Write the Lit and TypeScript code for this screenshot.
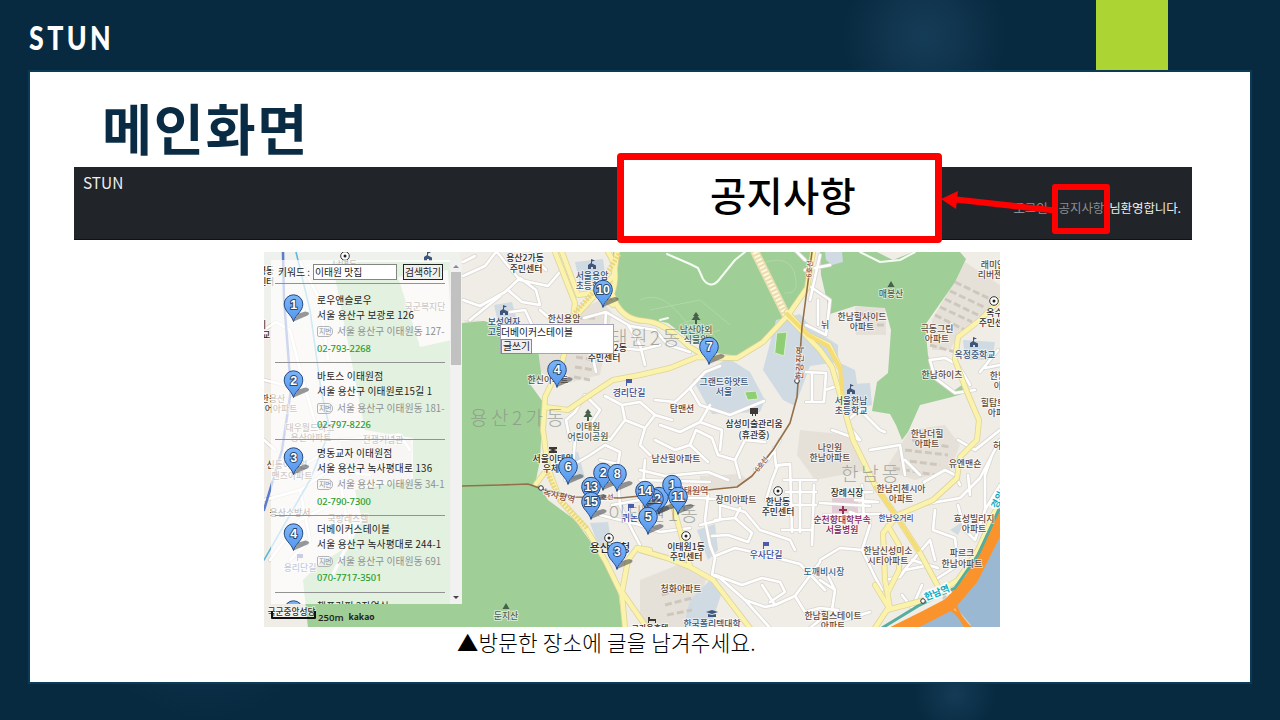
import { LitElement, html, svg, css } from "lit";
import { customElement } from "lit/decorators.js";

type Kind = "apt" | "gov" | "edu" | "park" | "road" | "med" | "rail" | "shop";
interface Label { x: number; y: number; t: string; k: Kind; s?: number; r?: number; }

const LABELS: Label[] = [
  { x: 525, y: 261, t: "용산2가동", k: "gov" }, { x: 526, y: 272, t: "주민센터", k: "gov" },
  { x: 592, y: 279, t: "서울용암", k: "edu" }, { x: 592, y: 289, t: "초등학교", k: "edu" },
  { x: 564, y: 322, t: "한신용암", k: "apt" },
  { x: 504, y: 325, t: "보성여자", k: "edu" }, { x: 504, y: 335, t: "고등학교", k: "edu" },
  { x: 608, y: 351, t: "이태원2동", k: "gov" }, { x: 604, y: 361, t: "주민센터", k: "gov" },
  { x: 548, y: 383, t: "한신아파트", k: "apt" },
  { x: 629, y: 396, t: "경리단길", k: "road" },
  { x: 588, y: 430, t: "이태원", k: "park" }, { x: 588, y: 440, t: "어린이공원", k: "park" },
  { x: 696, y: 333, t: "남산야외", k: "park" }, { x: 696, y: 343, t: "식물원", k: "park" },
  { x: 724, y: 385, t: "그랜드하얏트", k: "edu" }, { x: 724, y: 395, t: "서울", k: "edu" },
  { x: 682, y: 412, t: "탑맨션", k: "apt" },
  { x: 754, y: 427, t: "삼성미술관리움", k: "gov" }, { x: 754, y: 438, t: "(휴관중)", k: "gov" },
  { x: 891, y: 297, t: "매봉산", k: "park" },
  { x: 862, y: 320, t: "한남힐사이드", k: "apt" }, { x: 862, y: 330, t: "아파트", k: "apt" },
  { x: 825, y: 328, t: "뉘", k: "apt" },
  { x: 993, y: 268, t: "래미안", k: "apt" }, { x: 990, y: 278, t: "리버젠", k: "apt" },
  { x: 1001, y: 316, t: "옥수1동", k: "gov" }, { x: 995, y: 326, t: "주민센터", k: "gov" },
  { x: 937, y: 332, t: "극동그린", k: "apt" }, { x: 937, y: 342, t: "아파트", k: "apt" },
  { x: 975, y: 358, t: "옥정중학교", k: "edu" },
  { x: 942, y: 378, t: "한남하이츠", k: "apt" },
  { x: 998, y: 379, t: "한남", k: "apt" }, { x: 1002, y: 389, t: "아파", k: "apt" },
  { x: 851, y: 404, t: "서울한남", k: "edu" }, { x: 851, y: 414, t: "초등학교", k: "edu" },
  { x: 993, y: 406, t: "힐탑트", k: "apt" }, { x: 1000, y: 416, t: "아파트", k: "apt" },
  { x: 927, y: 437, t: "한남더힐", k: "apt" }, { x: 927, y: 447, t: "아파트", k: "apt" },
  { x: 997, y: 449, t: "허", k: "apt" },
  { x: 830, y: 451, t: "나인원", k: "apt" }, { x: 830, y: 461, t: "한남아파트", k: "apt" },
  { x: 965, y: 467, t: "유엔맨숀", k: "apt" },
  { x: 847, y: 496, t: "장례식장", k: "gov" },
  { x: 901, y: 492, t: "한남리첸시아", k: "apt" }, { x: 901, y: 502, t: "아파트", k: "apt" },
  { x: 842, y: 523, t: "순천향대학부속", k: "med" }, { x: 842, y: 533, t: "서울병원", k: "med" },
  { x: 896, y: 521, t: "한남오거리", k: "road", s: 7.6 },
  { x: 974, y: 522, t: "효성빌리지", k: "apt" }, { x: 974, y: 532, t: "아파트", k: "apt" },
  { x: 888, y: 554, t: "한남신성미소", k: "apt" }, { x: 888, y: 564, t: "시티아파트", k: "apt" },
  { x: 962, y: 556, t: "파르크", k: "apt" }, { x: 962, y: 567, t: "한남아파트", k: "apt" },
  { x: 824, y: 575, t: "도깨비시장", k: "shop" },
  { x: 833, y: 619, t: "한남힐스테이트", k: "apt" }, { x: 833, y: 629, t: "아파트", k: "apt" },
  { x: 676, y: 462, t: "남산힐아파트", k: "apt" },
  { x: 736, y: 503, t: "장미아파트", k: "apt" },
  { x: 778, y: 505, t: "한남동", k: "gov" }, { x: 778, y: 515, t: "주민센터", k: "gov" },
  { x: 686, y: 550, t: "이태원1동", k: "gov" }, { x: 686, y: 560, t: "주민센터", k: "gov" },
  { x: 766, y: 558, t: "우사단길", k: "road" },
  { x: 681, y: 592, t: "청화아파트", k: "apt" },
  { x: 712, y: 627, t: "한국폴리텍대학", k: "edu" },
  { x: 650, y: 631, t: "크라운호텔", k: "gov", s: 8 },
  { x: 553, y: 462, t: "서울이태원", k: "gov" }, { x: 555, y: 472, t: "우체국", k: "gov" },
  { x: 610, y: 552, t: "용산구청", k: "gov", s: 11 },
  { x: 506, y: 619, t: "둔지산", k: "park" },
  { x: 634, y: 521, t: "퀴논길", k: "road" },
  { x: 692, y: 494, t: "이태원역", k: "rail" },
  { x: 559, y: 499, t: "녹사평역", k: "rail", r: 14 },
  { x: 605, y: 500, t: "6호선", k: "rail", s: 7, r: -4 },
  { x: 800, y: 366, t: "한강진역", k: "rail", r: -88, s: 9 },
  { x: 809, y: 272, t: "6호선", k: "rail", r: -85, s: 7 },
  { x: 761, y: 467, t: "6호선", k: "rail", r: -52, s: 7 },
  { x: 425, y: 310, t: "국군복지단", k: "apt" },
  { x: 310, y: 431, t: "대우월드마크", k: "apt" }, { x: 311, y: 441, t: "용산아파트", k: "apt" },
  { x: 383, y: 443, t: "전쟁기념관", k: "apt" },
  { x: 287, y: 468, t: "신동아트윈", k: "apt" }, { x: 292, y: 479, t: "맨즈아파트", k: "apt" },
  { x: 290, y: 516, t: "용산소방서", k: "gov" },
  { x: 348, y: 522, t: "국방레스텔", k: "apt" },
  { x: 300, y: 571, t: "용리단길", k: "road" },
  { x: 273, y: 402, t: "한용산", k: "apt" }, { x: 281, y: 412, t: "어아파트", k: "apt" },
  { x: 262, y: 274, t: "남영동", k: "gov" }, { x: 262, y: 285, t: "민센터", k: "gov" },
  { x: 262, y: 328, t: "지", k: "gov" }, { x: 266, y: 338, t: "교", k: "gov" },
  { x: 345, y: 268, t: "남영동", k: "gov" },
  { x: 291.5, y: 615, t: "국군중앙성당", k: "gov", s: 8.7 },
];

const PINS: [number, number, string][] = [
  [603, 307, "10"], [557, 387, "4"], [709, 364, "7"], [568, 484, "6"], [603, 490, "2"], [617, 491, "8"],
  [591, 504, "13"], [591, 519, "15"], [659, 514, ""], [654, 516, "12"], [645, 508, "14"],
  [672, 502, "1"], [678, 514, "11"], [648, 534, "5"], [617, 569, "3"],
];

const pin = (x: number, y: number, n: string) => svg`
  <g transform="translate(${x} ${y})">
    <path class="shade" d="M0 0L5-8L12-10Q18-9 14-6Z"></path>
    <path class="pin" d="M0 0C-2-7-9.300-10-9.300-17.400A9.300 9.300 0 0 1 9.300-17.400C9.300-10 2-7 0 0Z"></path>
    <text class="num" x="0" y="-13" text-anchor="middle">${n}</text>
  </g>`;

const pinCss = css`
  .shade { fill: #30343a; opacity: .5; }
  .pin { fill: url(#blue); stroke: #234a80; stroke-width: 1; }
  .num { font: 600 12.500px "Liberation Sans", sans-serif; fill: #fff; stroke: #29476d; stroke-width: 1.8px; paint-order: stroke; letter-spacing: -.3px; }
`;
const pinDefs = svg`<defs><linearGradient id="blue" x2="0" y2="1"><stop offset="0" stop-color="#7db4f8"></stop><stop offset="1" stop-color="#5397ee"></stop></linearGradient></defs>`;

const MINOR = [
  "M463 276L485 266L496 252M463 300L480 306L505 292L520 278L536 290L540 305L522 302L508 290M497 252L505 262L520 280L548 286L560 272",
  "M463 262L475 256M470 320L500 296M532 325L525 310L510 312M540 310L556 324L548 348M546 270L538 262L534 252",
  "M584 318L606 312L605 330L590 345L596 372M606 312L630 326L655 330M594 345L640 350L660 345M628 325L640 345L645 365M655 330L668 345L690 352",
  "M570 440L566 420L575 412L585 395L600 410L590 425L610 440L625 420L622 405L605 396M625 420L645 428L655 415L640 402L622 405M645 428L640 445L650 455",
  "M655 400L675 402L690 388L705 372L720 366M690 388L700 405L730 415L764 401M660 425L680 432L700 422L722 430L720 450M655 415L672 420M700 422L710 405",
  "M655 440L675 450L690 445L708 462M690 445L696 430L712 438L718 455L735 460L745 440L765 442M735 460L740 478M640 470L665 476L708 472L728 480M640 480L710 482",
  "M565 480L573 465L590 455L605 445L620 452L618 464L600 460M573 465L575 440M617 470L620 505L632 530L640 545M645 460L643 485",
  "M612 505L640 500M600 515L640 525L660 532L690 528M640 500L660 505L672 498L700 498L735 500M708 495L705 520L710 545L715 558M720 500L720 520L700 525",
  "M720 505L745 512L760 530L790 540L795 550M715 520L735 518L752 533L748 542L728 535L712 536M735 518L740 508",
  "M715 556L735 548L765 555L800 564L825 590M715 558L712 575L720 578L745 600L765 607L775 605L762 585M715 575L742 585L762 578L780 582L785 592L770 602M775 605L795 596L820 562M795 596L805 612L820 608L838 610M745 600L770 628",
  "M774 448L776 466L790 464L792 532M784 480L816 480M786 492L816 492M784 505L816 505M800 482L800 532M814 485L812 545M782 530L812 530M780 440L768 460L755 470",
  "M790 464L778 465L772 480L766 500M795 250L805 260M805 270L830 265M808 285L830 300L826 335L806 325M820 255L810 300M818 300L818 325",
  "M806 372L826 373L824 402L806 402M812 373L812 402M825 390L840 385M848 420L860 410L880 430L885 432M832 430L860 440L848 425",
  "M820 503L870 506M824 515L880 514M850 493L872 492M855 500L878 502M862 485L864 520M870 525L862 550L875 577L882 590M862 550L840 548L820 560M870 520L850 512",
  "M885 580L900 577L905 570L925 566M902 595L912 608L922 585M902 573L930 540L935 560M912 560L938 568",
  "M920 505L960 498L980 478L1000 440M958 505L965 530L975 540L985 510L1000 485M985 510L985 475L992 455M935 510L933 530L955 538L958 565L938 578M970 495L968 475",
  "M924 482L945 470L955 475L960 485M905 460L920 475M870 450L900 445L905 475M958 440L975 450L1000 430",
  "M930 360L945 358L958 365L970 385M930 360L935 378L955 393L975 390M985 368L1000 365M980 372L998 350",
  "M820 580L835 590L832 610L845 620L870 612M820 620L810 628M835 590L825 570",
  "M264 330L276 322L290 330L300 370L320 440M300 262L320 300L328 360M264 380L285 385L300 378M282 445L296 470L320 455M264 440L275 450",
  "M264 500L300 490L330 470M270 560L300 520L340 500M300 490L310 540L290 560M340 440L400 435L410 450M330 470L370 475M340 480L350 540L330 580",
];

const YELLOW = [
  "M555 252L575 303L572 325L562 362L545 397L543 430L548 468L560 500L587 530L606 562L622 595L625 628",
  "M562 252L578 295L598 292L613 305M608 252Q620 270 612 294Q620 320 645 321Q664 322 690 347L703 355",
  "M617 252L614 275L572 320M545 407L568 410L593 393L613 380L640 375L670 368L697 357L737 358L763 342L789 314L807 288L813 252",
  "M787 312L808 335L829 345L840 368M789 318L820 350L832 367L841 398L853 440L876 487L897 517L920 553L940 590",
  "M1000 300L980 320L958 337L955 360L967 392L979 420L977 440L960 457L957 478L933 500L898 515L883 533L885 580L890 608M888 526L899 545L899 570L888 592",
  "M650 550L637 548L628 560L622 592L647 628M640 550L667 558L690 567L713 580L750 628M672 502L690 566M536 484L545 472",
  "M875 628L887 610L925 600L958 580L978 550L1000 500M889 608L875 585",
];

@customElement("place-map")
class PlaceMap extends LitElement {
  static styles = [pinCss, css`
    :host { display: block; width: 736px; height: 375px; overflow: hidden; }
    svg { display: block; }
    path, line { fill: none; stroke-linejoin: round; stroke-linecap: round; }
    path.pin { fill: url(#blue); } path.shade { fill: #30343a; }
    path.land, .land { fill: #f0ede7; } .block { fill: #e5e1d9; } .green { fill: #9fcf96; } .school { fill: #cfdae3; } .clinic { fill: #e3ccd5; }
    .field { fill: #8fce74; stroke: #d9efcd; } .water { fill: #9ab8d2; } .pale { fill: #eef1ec; }
    .case { stroke: #d9d6d1; stroke-width: 4.2; } .minor { stroke: #fff; stroke-width: 2.6; }
    .ycase { stroke: #ddd49a; stroke-width: 6; } .yellow { stroke: #fbf3ac; stroke-width: 4.4; }
    .gold { stroke: #f6dc74; stroke-width: 4; } .dots { stroke: #ead77e; stroke-width: 5; stroke-dasharray: 2 1.5; stroke-linecap: butt; }
    .tan { stroke: #eadcae; stroke-width: 9; } .tandot { stroke: #fff8dd; stroke-width: 6; stroke-dasharray: 2 2; stroke-linecap: butt; }
    .line6 { stroke: #94704a; stroke-width: 1.6; } .lot { stroke: #cec7bd; stroke-width: 3; stroke-dasharray: 7 3; stroke-linecap: butt; }
    .trail { stroke: #f7fbf5; stroke-width: 2; } .faint { stroke: #b0d8a7; stroke-width: 1; }
    .orange { stroke: #fb932d; stroke-width: 13; } .teal { stroke: #55ae9d; stroke-width: 3; }
    .ramp { stroke: #fb932d; stroke-width: 3; } .bridge { stroke: #cfd0cb; stroke-width: 5; }
    .sub1 { stroke: #5c7bc9; stroke-width: 2.5; } .sub4 { stroke: #5fb6dd; stroke-width: 1.6; }
    .area { font: 300 19px "Noto Sans CJK KR", sans-serif; fill: #8b918a; opacity: .75; }
    .lb { font-family: "Noto Sans CJK KR", sans-serif; font-weight: 500; stroke: #fff; stroke-opacity: .7; stroke-width: 1.6px; paint-order: stroke; text-anchor: middle; }
    .apt { fill: #5f4a3d; } .gov { fill: #302e2c; } .edu { fill: #3b5374; } .park { fill: #4c6150; }
    .road { fill: #3a4a99; } .med { fill: #83204e; } .rail { fill: #8b5040; } .shop { fill: #2a6890; }
    .han { fill: #10a9c3; font-size: 9.5px; font-weight: 600; stroke-width: 3px; stroke-opacity: .95; }
    .ring { fill: #fff; stroke: #333; stroke-width: 1; } .dot { fill: #222; }
    .icoedu { fill: #3f5579; } .icopark { fill: #46604a; } .flag { fill: #4a5caa; } .icogov { fill: #3b3836; } .cross { fill: #963356; }
    .scale { stroke: #111; stroke-width: 2; stroke-linecap: butt; }
    .m { font: 600 9.600px "Open Sans", sans-serif; fill: #222; } .k { font: 700 9.200px "Open Sans", sans-serif; fill: #222; }
  `];
  render() {
    const school = (x: number, y: number) => svg`<path class="icoedu" d="M${x - 4} ${y + 4}v-4l3-2v-4l4 1.500-3 1v2l4 2v3.500h-3v-2h-2v2z"></path>`;
    const office = (x: number, y: number) => svg`<circle class="ring" cx=${x} cy=${y} r="4.300"></circle><circle class="dot" cx=${x} cy=${y} r="1.500"></circle>`;
    const tri = (x: number, y: number) => svg`<path class="icopark" d="M${x} ${y - 3}l3.500 6h-7z"></path>`;
    const tree = (x: number, y: number) => svg`<path class="icopark" d="M${x} ${y - 6}l3 4h-1.500l3 4h-3.500v4h-2v-4h-3.500l3-4h-1.500z"></path>`;
    const flag = (x: number, y: number) => svg`<path class="flag" d="M${x - 3} ${y - 3}h6v4h-5v3h-1z"></path>`;
    return html`<svg width="736" height="375" viewBox="264 252 736 375">
      ${pinDefs}
      <rect class="land" x="264" y="252" width="736" height="375"></rect>
      <path class="pale" d="M264 252H460V330H264z"></path>
      <path class="block" d="M463 320L484 321L500 326L535 345L560 320L600 300L612 312L600 375L560 385zM640 580L690 560L700 580L685 628H640zM800 430L850 435L868 470L815 480L797 455zM885 470L910 430L945 425L960 445L950 470L915 480zM932 320L965 262L1000 285V300L958 335L950 350H932zM855 307H886V335H856zM700 476L740 474L748 480L735 488L700 488zM658 598L680 562L708 574L690 628H664z"></path>
      <path class="green" d="M332 262H462V323L484 321L500 326L538 350L542 380L530 384L543 402L540 460L536 480L548 500L575 520L600 555L618 590L623 628H308L303 580L318 565L350 545L362 520L355 490L413 480L413 438L365 430z"></path>
      <path class="land" d="M398 277L448 270L452 340L420 347z"></path>
      <path class="block" d="M340 440H411V482H350z"></path>
      <path class="green" d="M613 252H813L806 285L789 312L762 341L738 356L715 353L690 340L668 323L640 318L618 312L613 290z"></path>
      <path class="green" d="M820 252H877L893 260L913 252H960L966 259L955 282L925 325L928 355L930 362L935 378L952 392L962 385L966 389L962 394L952 397L920 405L908 432L902 440L896 425L890 414L872 411L877 382L888 373L891 330L885 308L855 306L830 314L821 275z"></path>
      <path class="school" d="M575 262L603 259L606 280L580 285zM494 305L512 302L518 325L500 330zM776 320L800 314L812 328L838 345V362L810 366L795 406L783 400L763 370zM693 380L728 358L750 372L765 400L760 412L712 414zM835 385L870 383L872 405L845 412zM838 362L855 370L858 390L842 385zM963 340L995 342L992 360H965zM697 530L715 524L718 550L708 560zM690 600L715 575L722 592L710 628H683zM590 523L608 522L612 546L600 550zM563 455L578 452L585 478L568 480zM825 252H842L843 262L832 265L826 260zM965 520L958 535L950 530z"></path>
      <path class="clinic" d="M832 498H858V518H832z"></path>
      <path class="field" d="M777 333L787 332L784 356L775 353zM745 392L756 391L758 399L748 400z"></path>
      <path class="faint" d="M640 300Q660 290 680 315T720 330M650 310L700 300L730 325M766 262Q790 255 795 275T785 293M680 325Q700 310 720 345"></path>
      <path class="trail" d="M667 254L690 264L698 268L703 279Q710 289 718 281L735 260L745 252M860 252L880 262L900 260L915 252M660 320L668 318"></path>
      <path class="lot" d="M578 318H598M577 326H597M576 335H596M577 347L596 350M576 357L595 360M575 367L594 370M574 377L590 380M935 315L965 330M940 307L972 322M945 299L978 315M950 291L984 307M955 282L990 299M900 460L940 465M893 468L935 475M905 450L948 455M912 440L950 447M662 595L690 585M665 605L692 598M667 615L692 610M857 314H884M857 325H884M930 345L955 352"></path>
      ${MINOR.map(d => svg`<path class="case" d=${d}></path>`)}
      ${MINOR.map(d => svg`<path class="minor" d=${d}></path>`)}
      <path class="tan" d="M755 252L786 315"></path><path class="tandot" d="M755 252L786 315"></path>
      <path class="water" d="M890 628L940 610L975 580L1000 528V628z"></path>
      ${YELLOW.map(d => svg`<path class="ycase" d=${d}></path>`)}
      ${YELLOW.map(d => svg`<path class="yellow" d=${d}></path>`)}
      <path class="gold" d="M876 487L897 517L918 550M787 314L808 335L828 346L840 368L843 400M641 493L673 490"></path>
      <path class="dots" d="M604 280L573 315M546 470L560 500L587 528M619 254L606 275"></path>
      <path class="bridge" d="M945 598L968 625"></path>
      <path class="orange" d="M893 633L925 617L950 604L972 578L985 552L1005 512"></path>
      <path class="ramp" d="M940 608Q955 605 966 628M955 600Q955 612 970 628"></path>
      <path class="teal" d="M882 628L918 606L955 588L978 555L1000 507"></path>
      <path class="line6" d="M462 486L500 485L528 484L545 490L575 497L620 498L670 493L707 490L737 487L752 476L773 450L790 423L797 397L802 327L812 252"></path>
      <path class="sub1" d="M283 252L284 300L291 390L282 450L264 510"></path>
      <path class="sub4" d="M296 252L310 310L321 390L330 430L310 480L264 560"></path>
      <circle class="ring" cx="541" cy="488" r="2.300"></circle><circle class="ring" cx="797" cy="381" r="2.300"></circle>
      <circle class="ring" cx="923" cy="601" r="2.300"></circle>
      <text class="area" x="470" y="425" textLength="94">용산2가동</text>
      <text class="area" x="590" y="345" textLength="90">이태원2동</text>
      <text class="area" x="608" y="521" textLength="90">이태원1동</text>
      <text class="area" x="841" y="481" textLength="58">한남동</text>
      ${LABELS.map(l => svg`<text class="lb ${l.k}" x=${l.x} y=${l.y} font-size=${l.s ?? 8.9} transform=${l.r ? `rotate(${l.r} ${l.x} ${l.y - 3})` : "rotate(0)"}>${l.t}</text>`)}
      <text class="lb han" x="937" y="596" transform="rotate(-22 937 593)">한남역</text>
      <text class="lb han" x="998" y="503" transform="rotate(-65 998 500)">경의</text>
      ${school(592, 265)}${school(504, 311)}${school(851, 390)}${school(974, 343)}${school(428, 257)}
      ${office(994, 301)}${office(778, 491)}${office(686, 536)}${office(609, 538)}${office(345, 256)}
      ${tri(891, 284)}${tri(506, 606)}${tree(696, 318)}${tree(588, 415)}
      ${flag(629, 382)}${flag(766, 545)}${flag(631, 507)}${flag(300, 557)}
      <path class="icogov" d="M750 408h8v6h-2v2h-1v-2h-2v2h-1v-2h-2zM549 447h8v2l-3 1 3 1v2h-8v-2l3-1-3-1zM648 617h2v2h6v4h-1v-2h-6v2h-1z"></path>
      <path class="icoedu" d="M706 612l6-2 6 2-6 2zM708 614v3h8v-3l-4 1z"></path>
      <path class="cross" d="M842 506h2v3h3v2h-3v3h-2v-3h-3v-2h3z"></path>
      <path class="scale" d="M272 611V618H315V611"></path>
      <text class="m" x="318" y="621">250m</text><text class="k" x="348.500" y="620" textLength="26" lengthAdjust="spacingAndGlyphs">kakao</text>
      ${PINS.map(p => pin(...p))}
    </svg>`;
  }
}

@customElement("place-row")
class PlaceRow extends LitElement {
  static properties = { n: {}, name: {}, addr: {}, lot: {}, tel: {} };
  declare n: string; declare name: string; declare addr: string; declare lot: string; declare tel: string;
  static styles = [pinCss, css`
    :host { display: flex; flex: none; box-sizing: border-box; height: 76.600px; width: 170px; border-bottom: 1px solid #929292; overflow: hidden; font: 400 9.700px/15px "Noto Sans CJK KR", sans-serif; letter-spacing: .22px; color: #222; white-space: nowrap; }
    svg { flex: none; width: 42px; height: 36px; margin-top: 1px; }
    .info { flex: 1; min-width: 0; padding-top: 6px; overflow: hidden; }
    .lot { display: flex; align-items: center; gap: 4px; color: #8f8f8f; height: 18px; letter-spacing: .1px; }
    .tag { flex: none; font-size: 7px; line-height: 8px; border: 1px solid #b4b4b4; border-radius: 2px 5px 5px 2px; padding: 0 2px 1px 1px; width: 11px; letter-spacing: -.5px; }
    .tel { color: #2b9d2b; font: 500 9.300px/16px "Noto Sans", sans-serif; letter-spacing: 0; }
  `];
  render() {
    return html`<svg viewBox="275 287 42 36">${pinDefs}${pin(293.5, 320.5, this.n)}</svg>
      <div class="info"><div>${this.name}</div><div>${this.addr}</div>
      <div class="lot"><span class="tag">지번</span><span>${this.lot}</span></div><div class="tel">${this.tel}</div></div>`;
  }
}

@customElement("app-root")
class AppRoot extends LitElement {
  static styles = css`
    :host { display: block; position: relative; width: 1280px; height: 720px; overflow: hidden; box-sizing: border-box; font-family: "Noto Sans CJK KR", sans-serif;
      background: radial-gradient(circle at 924px 36px, #153c57 0, #11354e 35px, #072a40 82px, transparent 83px), radial-gradient(circle at 955px 694px, #143b56 0, #072a40 41px, transparent 42px), radial-gradient(circle at 205px 595px, #0d314a 60px, #072a40 125px, transparent 126px), #072a40; }
    .top { height: 70px; display: flex; justify-content: space-between; box-sizing: border-box; padding: 0 112px 0 29px; }
    .logo { font: 900 31.500px/76px "Lato", sans-serif; color: #fff; letter-spacing: 4px; transform: scaleX(.85); transform-origin: left; }
    .tab { width: 72px; background: #acd433; }
    .card { box-sizing: border-box; width: 1224px; height: 614px; margin-left: 28px; border: 2px solid #0c3b58; background: #fff; display: flex; flex-direction: column; padding: 0 58px 0 44px; }
    h1 { margin: 0 0 0 28px; height: 95px; font-size: 54.500px; line-height: 109px; font-weight: 700; letter-spacing: 1.600px; color: #092c44; white-space: nowrap; }
    nav { height: 73px; box-sizing: border-box; background: #212429; border-bottom: 1px solid #111; display: flex; justify-content: space-between; padding: 0 11px 0 9px; color: #eee; }
    .brand { font-size: 15.400px; line-height: 30px; font-weight: 400; }
    .links { display: flex; font-size: 12.500px; line-height: 82px; white-space: nowrap; letter-spacing: -.1px; }
    .links span { color: #8d8f92; } .login { margin-right: 11px; } .notice { margin-right: 5px; }
    .stage { position: relative; width: 736px; margin: 12px 0 0 190px; }
    .panel { position: absolute; left: 7px; top: 8px; width: 191px; height: 344px; background: #ffffffb3; display: flex; overflow: hidden; }
    .list { width: 179px; overflow: hidden; padding-left: 4px; box-sizing: border-box; display: flex; flex-direction: column; }
    .search { flex: none; height: 24px; margin-bottom: 2.500px; border-bottom: 1px solid #929292; box-sizing: border-box; width: 170px; display: flex; align-items: center; font-size: 9.800px; color: #222; white-space: nowrap; }
    .key { width: 35px; padding-left: 3px; }
    .box { width: 82px; height: 14px; line-height: 14px; border: 1px solid #858585; background: #fff; text-indent: 1px; margin-right: 6px; }
    .btn { line-height: 14px; height: 14px; border: 1px solid #222; background: #f0f0f0; padding: 0 1px; font-size: 9.800px; }
    .bar { width: 12px; background: #f1f1f1; display: flex; flex-direction: column; align-items: center; }
    .up, .down { border: 3px solid transparent; width: 0; height: 0; }
    .up { border-bottom: 3px solid #8a8a8a; margin: 2px 0 4px; } .down { border-top: 3px solid #444; margin: auto 0 2px; }
    .thumb { width: 10px; height: 93px; background: #c1c1c1; }
    .info { position: absolute; left: 236px; top: 72px; width: 112px; height: 28px; border: 1px solid #a3a3bb; background: #fff; font-size: 9.800px; line-height: 14px; color: #222; }
    .info .write { display: inline-block; border: 1px solid #888; background: #efefef; line-height: 13px; padding: 0 1px; }
    .caption { margin-left: 383px; font-size: 21.300px; line-height: 29px; font-weight: 300; letter-spacing: .18px; color: #000; white-space: nowrap; }
    .callout { position: absolute; left: 617px; top: 153px; width: 325px; height: 90px; box-sizing: border-box; border: 7px solid #f00; border-radius: 4px; background: #fff; text-align: center; font-size: 39.400px; font-weight: 500; line-height: 67px; color: #000; padding-left: 7px; letter-spacing: .3px; }
    .mark { position: absolute; left: 1052px; top: 184px; width: 58px; height: 50px; box-sizing: border-box; border: 6px solid #f00; border-radius: 3px; }
    .arrow { position: absolute; left: 940px; top: 185px; }
  `;
  render() {
    return html`
      <div class="top"><div class="logo">STUN</div><div class="tab"></div></div>
      <main class="card">
        <h1>메인화면</h1>
        <nav><div class="brand">STUN</div><div class="links"><span class="login">로그인</span><span class="notice">공지사항</span>님환영합니다.</div></nav>
        <div class="stage">
          <place-map></place-map>
          <div class="panel">
            <div class="list">
              <div class="search"><span class="key">키워드 :</span><span class="box">이태원 맛집</span><span class="btn">검색하기</span></div>
              <place-row n="1" name="로우앤슬로우" addr="서울 용산구 보광로 126" lot="서울 용산구 이태원동 127-" tel="02-793-2268"></place-row>
              <place-row n="2" name="바토스 이태원점" addr="서울 용산구 이태원로15길 1" lot="서울 용산구 이태원동 181-" tel="02-797-8226"></place-row>
              <place-row n="3" name="명동교자 이태원점" addr="서울 용산구 녹사평대로 136" lot="서울 용산구 이태원동 34-1" tel="02-790-7300"></place-row>
              <place-row n="4" name="더베이커스테이블" addr="서울 용산구 녹사평대로 244-1" lot="서울 용산구 이태원동 691" tel="070-7717-3501"></place-row>
              <place-row n="5" name="챔프커피 2작업실"></place-row>
            </div>
            <div class="bar"><i class="up"></i><div class="thumb"></div><i class="down"></i></div>
          </div>
          <div class="info"><div>더베이커스테이블</div><span class="write">글쓰기</span></div>
        </div>
        <div class="caption">▲방문한 장소에 글을 남겨주세요.</div>
      </main>
      <svg class="arrow" width="120" height="40"><path d="M16 14.500L115 25.500" stroke="#f00" stroke-width="6"></path><path d="M1 14L18 6L16 24Z" fill="#f00"></path></svg>
      <div class="mark"></div>
      <div class="callout">공지사항</div>`;
  }
}
